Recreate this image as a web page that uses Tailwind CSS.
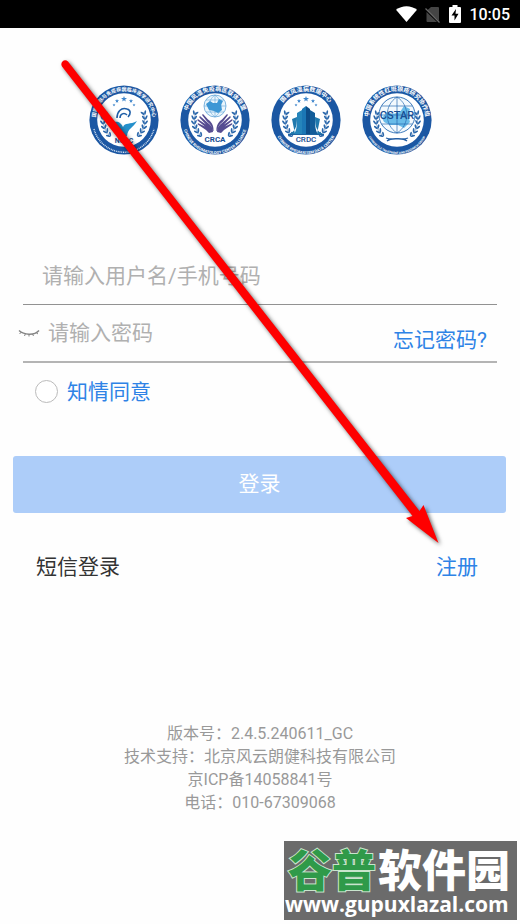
<!DOCTYPE html>
<html lang="zh-CN">
<head>
<meta charset="utf-8">
<meta name="viewport" content="width=device-width, initial-scale=1">
<title>登录</title>
<script src="https://cdn.jsdelivr.net/npm/@tailwindcss/browser@4"></script>
</head>
<body class="relative min-h-screen overflow-x-hidden bg-[#fefefe] font-[Roboto,'Noto_Sans_CJK_SC',sans-serif] text-[21px] leading-8 text-[#333]">

<!-- Shared emblem parts -->
<svg class="absolute size-0" aria-hidden="true">
  <defs>
    <path id="arcTop" d="M7.800 43 A28.500 28.500 0 1 1 62.200 43"/>
    <path id="arcBottom" d="M3 37 A32 32 0 0 0 67 37"/>
    <g id="sprig">
      <ellipse cx="12.600" cy="34" rx=".9" ry="2.400" transform="rotate(-28 12.600 34)"/>
      <ellipse cx="15.400" cy="34" rx=".9" ry="2.300" transform="rotate(34 15.400 34)"/>
    </g>
    <g id="branch">
      <use href="#sprig" transform="rotate(-48 35 35)"/>
      <use href="#sprig" transform="rotate(-35 35 35)"/>
      <use href="#sprig" transform="rotate(-22 35 35)"/>
      <use href="#sprig" transform="rotate(-9 35 35)"/>
      <use href="#sprig" transform="rotate(4 35 35)"/>
      <use href="#sprig" transform="rotate(17 35 35)"/>
      <path d="M20 50 A21 21 0 0 1 16 27" fill="none" stroke="#2a67ab" stroke-width=".5"/>
    </g>
    <g id="laurel" fill="#2a67ab">
      <use href="#branch"/>
      <use href="#branch" transform="translate(70 0) scale(-1 1)"/>
    </g>
    <path id="star" d="M0 -3 L.8 -.9 L3 -.9 L1.200 .5 L1.800 2.600 L0 1.300 L-1.800 2.600 L-1.200 .5 L-3 -.9 L-.8 -.9Z"/>
    <g id="stars" fill="#3f86cc">
      <use href="#star" transform="translate(35 14)"/>
      <use href="#star" transform="translate(28 16) scale(.7)"/>
      <use href="#star" transform="translate(42 16) scale(.7)"/>
      <use href="#star" transform="translate(25 20) scale(.5)"/>
      <use href="#star" transform="translate(45 20) scale(.5)"/>
    </g>
    <g id="ring">
      <circle cx="35" cy="35" r="34.600" fill="#1b57a3"/>
      <circle cx="35" cy="35" r="26.800" fill="#fff"/>
    </g>
    <g id="hand">
      <path d="M33 47 C33 43 31 40 28 38 L20.500 31.500 C19.500 30.800 18.800 31.800 19.600 32.700 L26 39.500 L18.500 34.500 C17.400 34 17 35 17.800 35.800 L25 41.500 L18.800 38.500 C17.600 38 17.200 39 18.200 39.800 L26 45 L29 48 Z"/>
      <path d="M33.500 46 C34 40 31 36.500 28 34.500 L23.500 29.500 C22.500 28.700 21.800 29.600 22.400 30.500 L27 36.500 C30 39 32 41 32.500 46Z"/>
    </g>
  </defs>
</svg>

<header class="flex h-7 items-center justify-end gap-2 bg-black pr-[10px] text-[16px] font-medium text-white">
  <svg class="h-4 w-[21px]" viewBox="0 0 21 16" role="img" aria-label="Wi-Fi"><path d="M0 3.800 C6 -1 15 -1 21 3.800 L10.500 16Z" fill="#fff"/></svg>
  <svg class="h-[17px] w-4" viewBox="0 0 16 17" role="img" aria-label="无 SIM 卡"><path d="M6 1 H13 Q14 1 14 2 V15 L2 4.500Z M1.500 6 L12 16 H2.500 Q1.500 16 1.500 15Z" fill="#454545"/><path d="M.5 2.500 L14.500 16.500" stroke="#666" stroke-width="1.200"/></svg>
  <svg class="h-[18px] w-3" viewBox="0 0 12 18" role="img" aria-label="正在充电"><path d="M3.500 0 H8.500 V2 H11 Q12 2 12 3 V17 Q12 18 11 18 H1 Q0 18 0 17 V3 Q0 2 1 2 H3.500Z" fill="#fff"/><path d="M7 4 L2.500 10.500 H5.500 V15.500 L9.500 8.800 H6.500Z" fill="#000"/></svg>
  <time class="pt-px">10:05</time>
</header>

<main>
  <div class="flex justify-center gap-[21px] pt-[57px]">
    <svg class="size-[70px]" viewBox="0 0 70 70" role="img" aria-label="NCRC">
      <use href="#ring"/>
      <text class="fill-white text-[5px] font-bold" text-anchor="middle"><textPath href="#arcTop" startOffset="50%">国家皮肤与免疫疾病临床医学研究中心</textPath></text>
      <path d="M5 44 A31 31 0 0 0 65 44" fill="none" stroke="#d5e3f3" stroke-width="1.500" stroke-dasharray="1 .8"/>
      <use href="#laurel"/><use href="#stars"/>
      <path d="M28 33 C28 27 32 22 38 24 C42 25 42 29 39 32 M31 33 C31 29 35 27 38 30" fill="none" stroke="#1f5fa8" stroke-width="1.600"/>
      <path d="M24 37 C30 36 32 38 34 42 C36 37 41 40 48 36 C44 43 39 43 38 51 H30 C31 43 28 41 24 37Z" fill="#2590cb"/>
      <text x="35" y="58" text-anchor="middle" class="fill-[#174d92] text-[7px] font-bold">NCRC</text>
    </svg>
    <svg class="size-[70px]" viewBox="0 0 70 70" role="img" aria-label="CRCA">
      <use href="#ring"/>
      <text class="fill-white text-[6px] font-bold" text-anchor="middle"><textPath href="#arcTop" startOffset="50%">中国风湿免疫病医联体联盟</textPath></text>
      <text class="fill-white text-[4px] font-bold" text-anchor="middle"><textPath href="#arcBottom" startOffset="50%">CHINESE RHEUMATOLOGY CENTER ALLIANCE</textPath></text>
      <use href="#laurel"/>
      <circle cx="35" cy="21" r="11" fill="#eaf5fc" stroke="#62a4d8" stroke-width=".8"/>
      <path d="M24 21 H46 M35 10 V32 M26 15 H44 M26 27 H44 M35 10 C27 16 27 26 35 32 M35 10 C43 16 43 26 35 32" fill="none" stroke="#62a4d8" stroke-width=".6"/>
      <path d="M26 19 L30 16 L33 18 L37 18 L39 14 L43 16 L41 20 L42 25 L38 28 L34 26 L29 25Z" fill="#3d97d5"/>
      <g fill="#554c91"><use href="#hand"/><use href="#hand" transform="translate(70 0) scale(-1 1)"/></g>
      <text x="35" y="57" text-anchor="middle" class="fill-[#174d92] text-[8px] font-bold">CRCA</text>
    </svg>
    <svg class="size-[70px]" viewBox="0 0 70 70" role="img" aria-label="CRDC">
      <use href="#ring"/>
      <text class="fill-white text-[6px] font-bold" text-anchor="middle"><textPath href="#arcTop" startOffset="50%">国家风湿病数据中心</textPath></text>
      <text class="fill-white text-[4px] font-bold" text-anchor="middle"><textPath href="#arcBottom" startOffset="50%">CHINESE RHEUMATISM DATA CENTER</textPath></text>
      <use href="#laurel"/><use href="#stars"/>
      <path d="M31 24 L35 21 V49 H31Z" fill="#1b77b5"/><path d="M35 21 L39 24 V49 H35Z" fill="#0d4d88"/>
      <path d="M26 28 L31 25 V49 H23 C26 45 26 40 26 28Z" fill="#2585bb"/><path d="M39 25 L44 28 C44 40 44 45 47 49 H39Z" fill="#135d99"/>
      <path d="M21 34 L26 32 C26 43 24 46 18 49 H24Z M49 34 L44 32 C44 43 46 46 52 49 H46Z" fill="#2079ad"/>
      <path d="M17 49.500 H53" stroke="#1c64a0" stroke-width="1"/>
      <text x="35" y="57" text-anchor="middle" class="fill-[#174d92] text-[8px] font-medium">CRDC</text>
    </svg>
    <svg class="size-[70px]" viewBox="0 0 70 70" role="img" aria-label="CSTAR">
      <use href="#ring"/>
      <text class="fill-white text-[6px] font-bold" text-anchor="middle"><textPath href="#arcTop" startOffset="50%">中国系统性红斑狼疮研究协作组</textPath></text>
      <text class="fill-white text-[3px] font-bold" text-anchor="middle"><textPath href="#arcBottom" startOffset="50%">CHINESE SLE TREATMENT AND RESEARCH GROUP</textPath></text>
      <use href="#laurel"/>
      <circle cx="35" cy="30" r="18" fill="#f4fafe" stroke="#286bb3" stroke-width=".9"/>
      <path d="M20 33 L25 27 L31 29 L38 27 L42 21 L48 24 L46 30 L48 37 L42 43 L36 40 L28 40 L22 37Z" fill="#69bce9"/>
      <path d="M17 30 H53 M35 12 V48 M20 21 H50 M20 39 H50 M35 12 C22 20 22 40 35 48 M35 12 C48 20 48 40 35 48" fill="none" stroke="#286bb3" stroke-width=".7"/>
      <path d="M25 56 C31 51 39 56 46 53 M45 56 C39 51 31 56 24 53" fill="none" stroke="#245fa5" stroke-width="1.300"/>
      <text x="35" y="34" text-anchor="middle" class="fill-[#174d92] text-[11px] font-medium">CSTAR</text>
    </svg>
  </div>

  <form class="mt-[91px]">
    <div class="mx-[23px] border-b border-[#929292] pl-[19px]">
      <input type="text" aria-label="用户名/手机号码" placeholder="请输入用户名/手机号码" class="block h-[58px] w-full pt-0.5 outline-none placeholder:text-[#b0b0b0]">
    </div>
    <div class="flex h-14 items-center pr-[33px] pl-[18px]">
      <button type="button" aria-label="显示密码" class="shrink-0">
        <svg class="h-2 w-[22px]" viewBox="0 0 22 8" fill="none" stroke="#858585"><path d="M1 1.500 C6 6 16 7 21 1.500" stroke-width="1.400"/><path d="M3.500 3 L1.500 5 M7.500 4.500 L6.500 7 M11 5.500 V7.500 M14.500 5 L15.500 7 M18 3.500 L20 5" stroke-width="1"/></svg>
      </button>
      <input type="password" aria-label="密码" placeholder="请输入密码" class="ml-2 h-14 min-w-0 flex-1 outline-none placeholder:text-[#b0b0b0]">
      <a href="#forgot" class="pt-3.5 text-[#2e83e6]">忘记密码?</a>
    </div>
    <hr class="mx-[23px] border-t-2 border-[#b4b4b4]">
    <label class="flex h-14 items-center gap-[9px] pl-[35px] text-[#2e83e6]">
      <input type="checkbox" class="size-[23px] appearance-none rounded-full border border-[#bbb] bg-white checked:bg-[#2e83e6]"><span class="pt-0.5">知情同意</span>
    </label>
    <div class="mt-[37px] pr-[14px] pl-[13px]">
      <button type="submit" class="h-[57px] w-full rounded-[3px] bg-[#adcdf9] pb-0.5 text-white">登录</button>
    </div>
  </form>
  <nav class="mt-[38px] flex justify-between pr-[42px] pl-9">
    <a href="#sms">短信登录</a>
    <a href="#register" class="text-[#2e83e6]">注册</a>
  </nav>
</main>

<footer class="mt-[139px] pb-[108px] text-center text-[16px] leading-[23px] text-[#999]">
  <p>版本号：2.4.5.240611_GC</p>
  <p>技术支持：北京风云朗健科技有限公司</p>
  <p>京ICP备14058841号</p>
  <p>电话：010-67309068</p>
</footer>

<svg class="pointer-events-none absolute top-[50px] left-[50px] h-[510px] w-[410px] drop-shadow-[2px_2px_2px_rgba(0,0,0,0.6)]" viewBox="50 50 410 510" aria-hidden="true">
  <path d="M62 66.500 C59.500 62.500 64.500 58 68 61.500 L419.500 511 L423.500 505 L438.500 543 L406 518 L412.500 516Z" fill="#fe0000"/>
</svg>

<aside class="absolute right-[3px] bottom-1 h-[79px] w-[233px] bg-[#6b6b6b] text-white">
  <svg class="size-full" viewBox="0 0 233 79" role="img" aria-label="谷普软件园 www.gupuxlazal.com">
    <g class="font-['Noto_Sans_CJK_SC',sans-serif] text-[44px] font-black">
      <text x="4" y="46" fill="#2f9a49" stroke="#c9e5cd" stroke-width="2" paint-order="stroke">谷普</text>
      <text x="94" y="46" fill="#fff">软件园</text>
    </g>
    <text x="1" y="71" fill="#fff" class="font-['Open_Sans',sans-serif] text-[21px] font-bold">www.gupuxlazal.com</text>
  </svg>
</aside>
</body>
</html>
